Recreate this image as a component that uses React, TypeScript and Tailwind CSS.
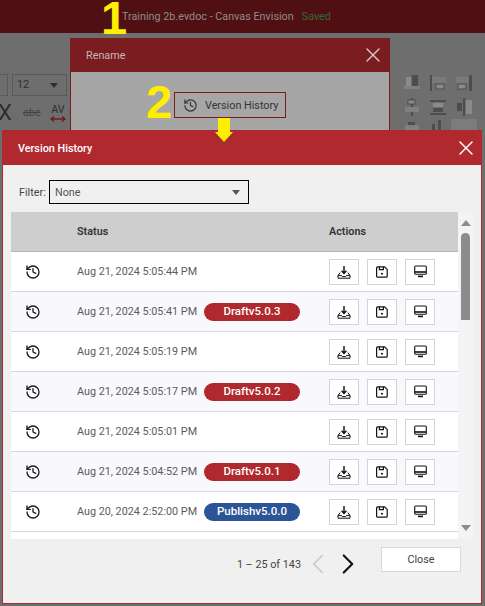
import { ChevronLeft, ChevronRight, History, X } from "lucide-react";

const rows = [
  { date: "Aug 21, 2024 5:05:44 PM" },
  { date: "Aug 21, 2024 5:05:41 PM", tag: "Draftv5.0.3" },
  { date: "Aug 21, 2024 5:05:19 PM" },
  { date: "Aug 21, 2024 5:05:17 PM", tag: "Draftv5.0.2" },
  { date: "Aug 21, 2024 5:05:01 PM" },
  { date: "Aug 21, 2024 5:04:52 PM", tag: "Draftv5.0.1" },
  { date: "Aug 20, 2024 2:52:00 PM", tag: "Publishv5.0.0", blue: true },
];

function DownloadIcon() {
  return (
    <svg width="14" height="14" viewBox="0 0 14 14" fill="none" stroke="#111" strokeWidth="1">
      <path d="M7 1v7.2M4.6 5.8 7 8.4l2.4-2.6" strokeWidth="1.4" />
      <path d="M3.2 7.6 1 10.6v2.6h12v-2.6l-2.2-3" />
      <path d="M1 10.6h3.6l.8 1h3.2l.8-1H13" />
    </svg>
  );
}

function SaveIcon() {
  return (
    <svg width="12" height="12" viewBox="0 0 12 12" fill="none" stroke="#111" strokeWidth="1.2">
      <path d="M1.6.8h7l2.6 2.6v6.8a1 1 0 0 1-1 1H1.6a1 1 0 0 1-1-1V1.8a1 1 0 0 1 1-1Z" />
      <path d="M3.4 1v2.6h4V1" />
      <circle cx="6" cy="7.8" r="1" fill="#111" stroke="none" />
    </svg>
  );
}

function ScreenIcon() {
  return (
    <svg width="13" height="13" viewBox="0 0 13 13" fill="none" stroke="#111" strokeWidth="1.1">
      <rect x="0.7" y="1" width="11.6" height="8.2" rx="1" />
      <path d="M1 7h11" strokeWidth="1.6" />
      <path d="M4 11.4h5" strokeWidth="1.6" />
    </svg>
  );
}

function ActionButton({ children }: { children: React.ReactNode }) {
  return (
    <div className="w-[30px] h-[26px] flex items-center justify-center border border-[#d3d3da] bg-white">
      {children}
    </div>
  );
}

function Row({ date, tag, blue, alt }: { date: string; tag?: string; blue?: boolean; alt: boolean }) {
  return (
    <div className={`h-10 shrink-0 flex items-center border-b border-[#d8d8e0] ${alt ? "bg-[#f8f8fd]" : "bg-white"}`}>
      <div className="w-[66px] pl-[14px] shrink-0">
        <History size={16} strokeWidth={2} className="text-[#1c1c1c]" />
      </div>
      <div className="w-[252px] shrink-0 flex items-center">
        <span className="w-[127px] shrink-0 pt-[2px] text-[#5c5c5c] whitespace-nowrap">{date}</span>
        {tag && (
          <span className={`w-[96px] h-[18px] pt-px rounded-full flex items-center justify-center text-white text-[11.5px] font-medium ${blue ? "bg-[#2b5597]" : "bg-[#b0292e]"}`}>
            {tag}
          </span>
        )}
      </div>
      <div className="flex gap-2">
        <ActionButton><DownloadIcon /></ActionButton>
        <ActionButton><SaveIcon /></ActionButton>
        <ActionButton><ScreenIcon /></ActionButton>
      </div>
    </div>
  );
}

function VersionHistory() {
  return (
    <div className="absolute left-[2px] top-[130px] w-[480px] h-[474px] flex flex-col bg-[#f0f0f0] border border-[#b0292e]">
      <div className="h-[34px] shrink-0 flex items-center justify-between pl-[15px] pr-[3px] bg-[#b0292e] text-white">
        <span className="pt-[2px] font-medium">Version History</span>
        <X size={24} strokeWidth={1.5} />
      </div>
      <div className="h-[47px] shrink-0 flex items-start pt-[15px] pl-4">
        <span className="w-[30px] h-6 pt-[2px] flex items-center text-[#444]">Filter:</span>
        <div className="w-[200px] h-6 flex items-center justify-between pl-[5px] pr-[8px] border border-black text-[#555]">
          <span className="pt-[2px]">None</span>
          <div className="w-0 h-0 border-x-[4px] border-x-transparent border-t-[5px] border-t-[#555]" />
        </div>
      </div>
      <div className="mx-2 w-[462px] h-[327px] flex bg-white">
        <div className="w-[447px] flex flex-col overflow-hidden">
          <div className="h-10 shrink-0 flex items-center pt-[2px] bg-[#cecece] border-b border-[#b5b5b5] font-semibold text-[#333]">
            <span className="w-[66px]" />
            <span className="w-[252px]">Status</span>
            <span>Actions</span>
          </div>
          {rows.map((r, i) => (
            <Row key={r.date} date={r.date} tag={r.tag} blue={r.blue} alt={i % 2 === 1} />
          ))}
        </div>
        <div className="flex-1 flex flex-col items-center bg-[#f4f4f4] pt-2 pb-2">
          <div className="w-0 h-0 border-x-[5px] border-x-transparent border-b-[6px] border-b-[#8c8c8c]" />
          <div className="w-[9px] h-[87px] mt-[7px] rounded-t-full bg-[#8c8c8c]" />
          <div className="w-0 h-0 mt-auto border-x-[5px] border-x-transparent border-t-[6px] border-t-[#8c8c8c]" />
        </div>
      </div>
      <div className="flex justify-end items-start pt-2 pr-5">
        <div className="flex items-center h-[26px] mt-1 text-[#444]">
          <span className="pt-[2px] whitespace-nowrap">1 – 25 of 143</span>
          <ChevronLeft size={34} strokeWidth={1.3} className="ml-0 text-[#d0d0d0]" />
          <ChevronRight size={34} strokeWidth={1.5} className="-ml-1 text-[#111]" />
        </div>
        <div className="ml-4 w-20 h-[25px] pt-[2px] flex items-center justify-center bg-white border border-[#d8d8d8] text-[#444]">
          Close
        </div>
      </div>
    </div>
  );
}

function Backdrop() {
  return (
    <div className="flex flex-col h-full bg-[#6e6e6e]">
      <div className="h-[33px] shrink-0 flex items-center pl-[122px] gap-[8px] bg-[#501013] text-[#8d8d8d]">
        <span className="pt-px">Training 2b.evdoc - Canvas Envision</span>
        <span className="pt-px text-[#2f6b35]">Saved</span>
      </div>
      <div className="flex justify-between pt-[41px] text-[#2e2e2e]">
        <div className="flex flex-col gap-[5px]">
          <div className="flex gap-1">
            <div className="w-2 h-[22px] border border-l-0 border-[#5a5a5a]" />
            <div className="w-[55px] h-[22px] flex items-center justify-between pl-1 pr-2 border border-[#5a5a5a]">
              12
              <div className="w-0 h-0 border-x-[4px] border-x-transparent border-t-[5px] border-t-[#2e2e2e]" />
            </div>
          </div>
          <div className="flex items-center">
            <span className="w-[25px] text-[22px] leading-6 -ml-[2px]">
              X<sup className="text-[7px] text-[#8a5a5a]">2</sup>
            </span>
            <span className="w-[27px] line-through text-[#444]">abc</span>
            <span className="flex flex-col items-center">
              <span className="leading-3">AV</span>
              <svg width="16" height="6" viewBox="0 0 16 6" fill="none" stroke="#701a1e" strokeWidth="1.4">
                <path d="M1 3h14M4 .5 1 3l3 2.5M12 .5 15 3l-3 2.5" />
              </svg>
            </span>
          </div>
        </div>
        <svg width="95" height="60" viewBox="0 0 95 60" fill="#4d4d4d" className="-mt-1">
          <rect x="61" y="49" width="26" height="11" fill="#7c7c7c" />
          <rect x="14" y="16" width="16" height="3" fill="#808080" /><rect x="16" y="7" width="5" height="9" fill="#8a8a8a" /><rect x="22" y="5" width="6" height="11" />
          <rect x="40" y="5" width="2" height="16" /><rect x="42" y="7" width="14" height="6" fill="#7a7a7a" /><rect x="46" y="14" width="8" height="5" fill="#8a8a8a" stroke="#4d4d4d" />
          <rect x="79" y="5" width="3" height="16" /><rect x="66" y="7" width="13" height="6" fill="#7a7a7a" /><rect x="68" y="14" width="8" height="5" fill="#8a8a8a" stroke="#4d4d4d" />
          <rect x="21" y="28" width="2" height="18" /><rect x="18" y="30" width="7" height="4" fill="#8a8a8a" stroke="#4d4d4d" /><rect x="15" y="37" width="14" height="5" fill="#808080" />
          <rect x="40" y="30" width="16" height="2" /><rect x="43" y="33" width="10" height="4" fill="#8a8a8a" /><rect x="43" y="38" width="10" height="4" /><rect x="40" y="43" width="16" height="2" />
          <rect x="67" y="33" width="5" height="8" /><rect x="73" y="28" width="2" height="18" /><rect x="76" y="30" width="6" height="14" fill="#8a8a8a" />
          <rect x="15" y="55" width="14" height="5" fill="#808080" /><rect x="18" y="52" width="7" height="3" />
          <rect x="42" y="54" width="3" height="6" /><rect x="48" y="50" width="3" height="10" />
        </svg>
      </div>
    </div>
  );
}

function RenameDialog() {
  return (
    <div className="absolute left-[70px] top-[38px] w-[320px] h-[100px] flex flex-col bg-[#a6a6a6] border-x border-[#7a1c20]">
      <div className="h-[34px] shrink-0 flex items-center justify-between pl-[15px] pr-[4px] bg-[#7a1c20] text-[#c9b6b6]">
        <span className="pt-[2px]">Rename</span>
        <X size={24} strokeWidth={1.5} className="text-[#cfc2c2]" />
      </div>
      <div className="pt-5 pl-[103px]">
        <div className="w-[112px] h-[26px] flex items-center gap-[7px] pl-2 border border-[#7a1c20] text-[#333]">
          <History size={15} strokeWidth={1.8} />
          <span className="pt-[2px]">Version History</span>
        </div>
      </div>
    </div>
  );
}

export default function App() {
  return (
    <div className="relative w-[485px] h-[606px] overflow-hidden text-[10.8px] font-['Roboto',sans-serif]">
      <Backdrop />
      <RenameDialog />
      <span className="absolute left-[101px] top-[-6px] text-[47px] leading-[48px] font-bold text-[#ffee00] font-['Liberation_Sans',sans-serif]">1</span>
      <span className="absolute left-[146px] top-[78px] text-[47px] leading-[48px] font-bold text-[#ffee00] font-['Liberation_Sans',sans-serif]">2</span>
      <VersionHistory />
      <svg width="18" height="24" viewBox="0 0 18 24" className="absolute left-[215px] top-[118px]" fill="#ffee00">
        <path d="M3 0h12v14h3l-9 10-9-10h3Z" />
      </svg>
    </div>
  );
}
